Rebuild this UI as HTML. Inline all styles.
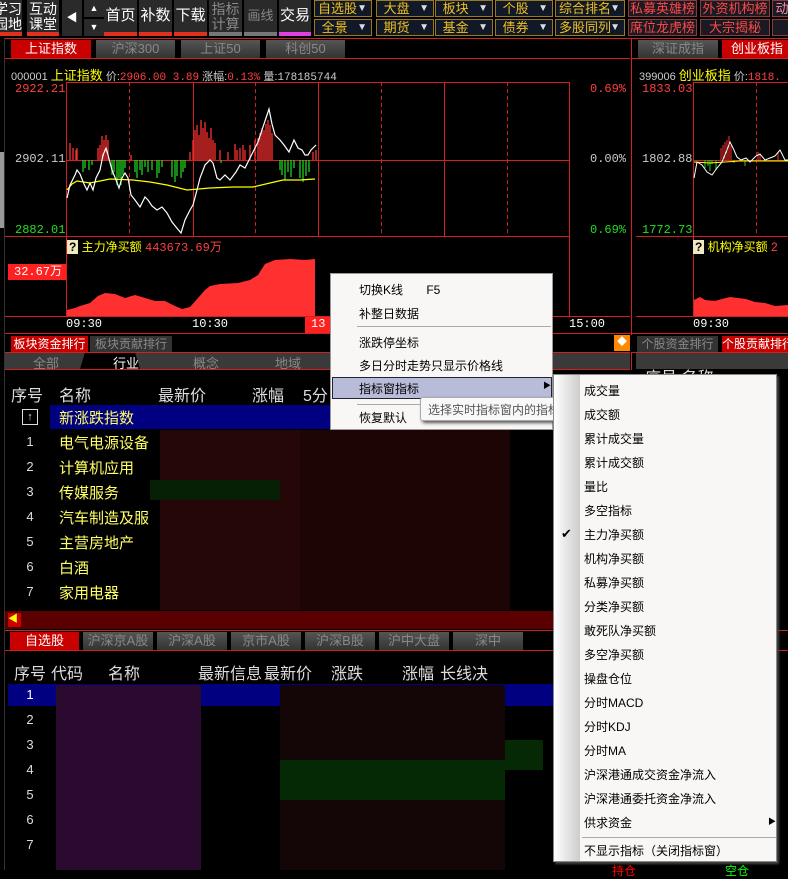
<!DOCTYPE html>
<html><head><meta charset="utf-8"><style>
*{margin:0;padding:0;box-sizing:border-box}
body{width:788px;height:870px;background:#000;overflow:hidden;position:relative;font-family:"Liberation Sans","Noto Sans CJK SC",sans-serif;color:#ccc}
.a{position:absolute;white-space:nowrap}
.tb{position:absolute;top:0;height:36px;background:#2a2a2a;color:#fff;font-size:15px;text-align:center;line-height:32px;border-bottom:4px solid #e0301e;white-space:nowrap;overflow:hidden}
.tb2{line-height:15px;padding-top:2px;font-size:14px}
.dd{position:absolute;height:17px;background:#111827;border:1px solid #9a7a1e;color:#f0c020;font-size:13px;line-height:15px;padding-left:3px}
.dd:after{content:"▼";position:absolute;right:4px;font-size:10px;color:#ddd}
.rd{position:absolute;height:17px;background:#1a1a22;border:1px solid #8a3a3a;color:#ff4848;font-size:13px;line-height:15px;text-align:center;overflow:hidden}
.tab{position:absolute;height:18px;background:linear-gradient(#555,#333);color:#888;font-size:13px;text-align:center;line-height:18px;overflow:hidden;white-space:nowrap}
.tab.on{background:#c80000;color:#fff}
.hl{position:absolute;height:1px;background:#d02020}
.vl{position:absolute;width:1px;background:#d02020}
.th{font-size:16px;color:#ddd}
.nm{font-size:15px;color:#ffff66}
.no{font-size:13px;color:#ddd;width:20px;text-align:center}
.mi{position:absolute;left:28px;font-size:12px;color:#000}
.si{position:absolute;left:30px;font-size:12px;color:#000}
</style></head><body>
<!-- toolbar -->
<div class="tb tb2" style="left:-6px;width:28px;text-align:right;padding-right:2px">学习<br>园地</div>
<div class="tb tb2" style="left:27px;width:32px;">互动<br>课堂</div>
<div class="tb" style="left:62px;width:20px;border-bottom:none;font-size:11px;line-height:36px">◀</div>
<div class="a" style="left:84px;top:0;width:20px;height:17px;background:#2a2a2a;color:#fff;font-size:9px;text-align:center;line-height:17px">▲</div>
<div class="a" style="left:84px;top:19px;width:20px;height:17px;background:#2a2a2a;color:#fff;font-size:9px;text-align:center;line-height:17px">▼</div>
<div class="tb" style="left:104px;width:33px">首页</div>
<div class="tb" style="left:139px;width:33px">补数</div>
<div class="tb" style="left:174px;width:33px">下载</div>
<div class="tb tb2" style="left:209px;width:33px;color:#888;border-bottom-color:#777">指标<br>计算</div>
<div class="tb" style="left:244px;width:33px;color:#888;border-bottom-color:#777;font-size:13px">画线</div>
<div class="tb" style="left:279px;width:32px;border-bottom-color:#e040e0">交易</div>
<div class="dd" style="left:314px;top:0;width:58px">自选股</div>
<div class="dd" style="left:314px;top:19px;width:58px">&nbsp;全景</div>
<div class="dd" style="left:376px;top:0;width:58px">&nbsp;大盘</div>
<div class="dd" style="left:376px;top:19px;width:58px">&nbsp;期货</div>
<div class="dd" style="left:435px;top:0;width:58px">&nbsp;板块</div>
<div class="dd" style="left:435px;top:19px;width:58px">&nbsp;基金</div>
<div class="dd" style="left:495px;top:0;width:58px">&nbsp;个股</div>
<div class="dd" style="left:495px;top:19px;width:58px">&nbsp;债券</div>
<div class="dd" style="left:555px;top:0;width:70px">综合排名</div>
<div class="dd" style="left:555px;top:19px;width:70px">多股同列</div>
<div class="rd" style="left:628px;top:0;width:69px">私募英雄榜</div>
<div class="rd" style="left:628px;top:19px;width:69px">席位龙虎榜</div>
<div class="rd" style="left:700px;top:0;width:70px">外资机构榜</div>
<div class="rd" style="left:700px;top:19px;width:70px">大宗揭秘</div>
<div class="rd" style="left:772px;top:0;width:20px;color:#f8a">动</div>
<div class="rd" style="left:772px;top:19px;width:20px"></div>
<div class="hl" style="left:5px;top:38px;width:783px"></div>
<div class="vl" style="left:4px;top:38px;height:832px;background:#333"></div>
<div class="a" style="left:0;top:152px;width:4px;height:76px;background:#999"></div>
<!-- top tabs -->
<div class="tab on" style="left:11px;top:40px;width:80px">上证指数</div>
<div class="tab" style="left:96px;top:40px;width:79px">沪深300</div>
<div class="tab" style="left:181px;top:40px;width:79px">上证50</div>
<div class="tab" style="left:266px;top:40px;width:79px">科创50</div>
<div class="tab" style="left:638px;top:40px;width:80px">深证成指</div>
<div class="tab on" style="left:722px;top:40px;width:70px">创业板指</div>
<div class="hl" style="left:5px;top:58px;width:625px"></div>
<div class="hl" style="left:632px;top:58px;width:156px"></div>
<div class="vl" style="left:631px;top:38px;height:297px"></div>
<div class="a" style="left:11px;top:65px;font-size:11px;color:#ccc">000001 <span style="color:#ff0;font-size:13px">上证指数</span> 价:<span style="color:#ff4040;font-family:'Liberation Mono',monospace">2906.00 3.89</span> 涨幅:<span style="color:#ff4040;font-family:'Liberation Mono',monospace">0.13%</span> 量:<span style="font-family:'Liberation Mono',monospace">178185744</span></div>
<div class="a" style="left:639px;top:65px;font-size:11px;color:#ccc">399006 <span style="color:#ff0;font-size:13px">创业板指</span> 价:<span style="color:#ff4040;font-family:'Liberation Mono',monospace">1818.</span></div>
<!-- charts svg -->
<svg class="a" style="left:0;top:0" width="788" height="335">
<g stroke="#d02020" fill="none">
<rect x="66.5" y="82.5" width="503" height="234"/>
<line x1="66" y1="236.5" x2="569" y2="236.5"/>
<line x1="66" y1="160.5" x2="569" y2="160.5"/>
<line x1="193.5" y1="82" x2="193.5" y2="236"/><line x1="318.5" y1="82" x2="318.5" y2="236"/><line x1="444.5" y1="82" x2="444.5" y2="236"/>
<g stroke-dasharray="4,3"><line x1="129.5" y1="82" x2="129.5" y2="236"/><line x1="255.5" y1="82" x2="255.5" y2="236"/><line x1="381.5" y1="82" x2="381.5" y2="236"/><line x1="507.5" y1="82" x2="507.5" y2="236"/></g>
<line x1="5" y1="236.5" x2="66" y2="236.5"/>
<line x1="5" y1="316.5" x2="630" y2="316.5"/>
<line x1="5" y1="333.5" x2="788" y2="333.5"/>
<rect x="693.5" y="82.5" width="100" height="234"/>
<line x1="636" y1="236.5" x2="788" y2="236.5"/>
<line x1="636" y1="316.5" x2="788" y2="316.5"/>
<line x1="693" y1="160.5" x2="788" y2="160.5"/>
<line x1="756.5" y1="82" x2="756.5" y2="236" stroke-dasharray="4,3"/>
</g>
<g stroke="#ff3030" stroke-width="1.3">
<path d="M70 160V143M73 160V148M76 160V150M77 160V148M98 160V148M100 160V145M102 160V136M104 160V140M106 160V135M108 160V140M131 160V155M190 160V152M193 160V140M195 160V130M197 160V125M199 160V135M201 160V120M203 160V128M205 160V122M207 160V132M209 160V138M211 160V128M213 160V140M215 160V143M220 160V150M228 160V152M235 160V144M237 160V150M240 160V148M243 160V145M245 160V150M250 160V145M255 160V140M258 160V138M260 160V133M262 160V128M264 160V130M266 160V124M268 160V120M270 160V125M272 160V133M313 160V152M316 160V150"/>
</g>
<g stroke="#20d020" stroke-width="1.3">
<path d="M83 160V172M85 160V168M89 160V170M92 160V165M112 160V175M114 160V172M117 160V185M119 160V178M121 160V185M123 160V175M125 160V168M135 160V172M137 160V178M140 160V170M142 160V175M145 160V167M148 160V172M152 160V170M157 160V178M159 160V173M162 160V167M172 160V177M175 160V182M177 160V176M181 160V178M183 160V172M185 160V168M221 160V163M280 160V170M282 160V175M285 160V180M288 160V172M291 160V177M294 160V168M300 160V178M303 160V182M306 160V176M309 160V172"/>
</g>
<polyline fill="none" stroke="#ffff00" stroke-width="1.3" points="67,190 72,184 77,181 90,183 110,179 133,180 150,182 167,185 187,190 210,188 233,187 253,187 270,183 283,180 300,180 315,179"/>
<polyline fill="none" stroke="#fff" stroke-width="1.2" points="67,198 70,185 75,175 77,170 80,174 84,184 87,190 90,183 93,190 96,178 100,170 103,155 106,148 108,155 112,170 116,180 119,188 122,178 125,173 128,178 131,195 135,200 140,207 145,197 148,200 152,206 157,210 162,207 167,213 172,222 176,227 181,233 185,220 190,210 193,205 197,190 200,178 205,165 210,160 213,163 217,178 220,180 225,175 230,180 236,172 240,165 245,168 250,158 254,150 258,142 262,130 266,118 269,109 272,124 275,135 280,140 284,145 289,152 294,140 298,148 302,150 305,155 308,155 311,150 316,145"/>
<path fill="#ff3030" d="M67 316V310L75 308L80 306L90 303L98 296L105 293L115 294L125 298L135 295L145 298L155 301L165 301L175 306L182 309L190 307L198 298L205 290L210 286L220 284L238 283L250 280L258 275L265 264L275 260L290 259L305 260L315 259V316Z"/>
<g stroke="#ff3030"><path d="M721 160V148M723 160V145M725 160V142M727 160V140M729 160V136M731 160V145M758 160V152M760 160V154M778 160V152"/></g>
<g stroke="#20d020"><path d="M705 160V168M708 160V166M710 160V171M712 160V164M716 160V170M734 160V163M745 160V166"/></g>
<polyline fill="none" stroke="#ffff00" points="694,162 710,163 725,162 740,161 788,161"/>
<polyline fill="none" stroke="#fff" points="694,178 697,162 702,165 707,172 712,175 717,168 722,162 727,150 730,142 733,148 737,157 741,160 746,158 750,162 756,156 760,154 765,160 770,158 775,156 780,150 785,160 788,160"/>
<path fill="#ff3030" d="M694 316V300L700 297L705 300L715 301L722 299L730 297L738 298L746 299L755 302L765 303L775 306L788 305V316Z"/>
</svg>
<div class="a" style="left:15px;top:82px;font-size:12px;color:#ff4040;font-family:'Liberation Mono',monospace">2922.21</div>
<div class="a" style="left:15px;top:152px;font-size:12px;color:#ccc;font-family:'Liberation Mono',monospace">2902.11</div>
<div class="a" style="left:15px;top:223px;font-size:12px;color:#20e020;font-family:'Liberation Mono',monospace">2882.01</div>
<div class="a" style="left:590px;top:82px;font-size:12px;color:#ff4040;font-family:'Liberation Mono',monospace">0.69%</div>
<div class="a" style="left:590px;top:152px;font-size:12px;color:#ccc;font-family:'Liberation Mono',monospace">0.00%</div>
<div class="a" style="left:590px;top:223px;font-size:12px;color:#20e020;font-family:'Liberation Mono',monospace">0.69%</div>
<div class="a" style="left:642px;top:82px;font-size:12px;color:#ff4040;font-family:'Liberation Mono',monospace">1833.03</div>
<div class="a" style="left:642px;top:152px;font-size:12px;color:#ccc;font-family:'Liberation Mono',monospace">1802.88</div>
<div class="a" style="left:642px;top:223px;font-size:12px;color:#20e020;font-family:'Liberation Mono',monospace">1772.73</div>
<div class="a" style="left:67px;top:238px;font-size:12px;color:#ff0"><span style="background:#f0e8c0;color:#000;font-weight:bold;padding:0 2px">?</span> 主力净买额 <span style="color:#ff4040;font-family:'Liberation Mono',monospace">443673.69万</span></div>
<div class="a" style="left:693px;top:238px;font-size:12px;color:#ff0"><span style="background:#f0e8c0;color:#000;font-weight:bold;padding:0 2px">?</span> 机构净买额 <span style="color:#ff4040">2</span></div>
<div class="a" style="left:8px;top:264px;width:58px;height:16px;background:#ff2020;color:#fff;font-size:12px;line-height:16px;padding-left:6px;font-family:'Liberation Mono',monospace">32.67万</div>
<div class="a" style="left:66px;top:317px;font-size:12px;color:#fff;font-family:'Liberation Mono',monospace">09:30</div>
<div class="a" style="left:192px;top:317px;font-size:12px;color:#fff;font-family:'Liberation Mono',monospace">10:30</div>
<div class="a" style="left:305px;top:317px;width:25px;height:16px;background:#ff2020;font-size:12px;color:#fff;padding-left:6px;font-family:'Liberation Mono',monospace">13</div>
<div class="a" style="left:569px;top:317px;font-size:12px;color:#fff;font-family:'Liberation Mono',monospace">15:00</div>
<div class="a" style="left:693px;top:317px;font-size:12px;color:#fff;font-family:'Liberation Mono',monospace">09:30</div>
<!-- section 2 -->
<div class="tab on" style="left:11px;top:336px;width:77px;height:16px;line-height:16px;font-size:12px">板块资金排行</div>
<div class="tab" style="left:90px;top:336px;width:82px;height:16px;line-height:16px;background:#333;font-size:12px">板块贡献排行</div>
<div class="a" style="left:614px;top:335px;width:16px;height:16px;background:#ff8800;color:#fff;font-size:10px;text-align:center;line-height:16px">◆</div>
<div class="tab" style="left:637px;top:336px;width:81px;height:16px;line-height:16px;background:#333;font-size:12px">个股资金排行</div>
<div class="tab on" style="left:722px;top:336px;width:70px;height:16px;line-height:16px;font-size:12px">个股贡献排行</div>
<div class="hl" style="left:5px;top:352px;width:625px"></div>
<div class="hl" style="left:632px;top:352px;width:156px"></div>
<div class="a" style="left:5px;top:353px;width:625px;height:16px;background:#3a3a3a"></div>
<div class="a" style="left:636px;top:353px;width:152px;height:16px;background:#3a3a3a"></div>
<div class="a" style="left:80px;top:353px;width:60px;height:16px;background:#000;clip-path:polygon(8% 0,92% 0,100% 100%,0 100%)"></div>
<div class="a" style="left:33px;top:353px;font-size:13px;color:#888">全部</div>
<div class="a" style="left:113px;top:353px;font-size:13px;color:#fff">行业</div>
<div class="a" style="left:193px;top:353px;font-size:13px;color:#888">概念</div>
<div class="a" style="left:275px;top:353px;font-size:13px;color:#888">地域</div>
<div class="hl" style="left:5px;top:369px;width:625px"></div>
<div class="vl" style="left:631px;top:352px;height:18px"></div>
<div class="a th" style="left:11px;top:382px">序号</div><div class="a th" style="left:59px;top:382px">名称</div>
<div class="a th" style="left:158px;top:382px">最新价</div><div class="a th" style="left:252px;top:382px">涨幅</div><div class="a th" style="left:303px;top:382px">5分</div>
<div class="a th" style="left:645px;top:364px">序号 名称</div>
<div class="a" style="left:50px;top:405px;width:280px;height:24px;background:#000080"></div>
<div class="a" style="left:160px;top:430px;width:170px;height:180px;background:#260707"></div>
<div class="a" style="left:300px;top:430px;width:210px;height:180px;background:#1e0505"></div>
<div class="a" style="left:150px;top:480px;width:130px;height:20px;background:#052005"></div>
<div class="a" style="left:22px;top:409px;width:16px;height:16px;border:1px solid #ddd;color:#ddd;font-size:11px;text-align:center;line-height:14px">↑</div>
<div class="a nm" style="left:59px;top:407px">新涨跌指数</div>
<div class="a no" style="left:20px;top:434px">1</div><div class="a nm" style="left:59px;top:432px">电气电源设备</div>
<div class="a no" style="left:20px;top:459px">2</div><div class="a nm" style="left:59px;top:457px">计算机应用</div>
<div class="a no" style="left:20px;top:484px">3</div><div class="a nm" style="left:59px;top:482px">传媒服务</div>
<div class="a no" style="left:20px;top:509px">4</div><div class="a nm" style="left:59px;top:507px">汽车制造及服</div>
<div class="a no" style="left:20px;top:534px">5</div><div class="a nm" style="left:59px;top:532px">主营房地产</div>
<div class="a no" style="left:20px;top:559px">6</div><div class="a nm" style="left:59px;top:557px">白酒</div>
<div class="a no" style="left:20px;top:584px">7</div><div class="a nm" style="left:59px;top:582px">家用电器</div>
<div class="a" style="left:5px;top:611px;width:625px;height:18px;background:#5a0000"></div>
<div class="a" style="left:8px;top:613px;width:13px;height:14px;background:#c00;color:#ff0;font-size:10px;line-height:14px">◀</div>
<div class="hl" style="left:5px;top:630px;width:783px"></div>
<div class="tab on" style="left:10px;top:632px;width:69px">自选股</div>
<div class="tab" style="left:83px;top:632px;width:70px">沪深京A股</div>
<div class="tab" style="left:157px;top:632px;width:70px">沪深A股</div>
<div class="tab" style="left:231px;top:632px;width:70px">京市A股</div>
<div class="tab" style="left:305px;top:632px;width:70px">沪深B股</div>
<div class="tab" style="left:379px;top:632px;width:70px">沪中大盘</div>
<div class="tab" style="left:453px;top:632px;width:70px">深中</div>
<div class="hl" style="left:5px;top:650px;width:783px"></div>
<div class="a th" style="left:14px;top:660px">序号</div><div class="a th" style="left:51px;top:660px">代码</div><div class="a th" style="left:108px;top:660px">名称</div>
<div class="a th" style="left:198px;top:660px">最新信息</div><div class="a th" style="left:264px;top:660px">最新价</div><div class="a th" style="left:331px;top:660px">涨跌</div>
<div class="a th" style="left:402px;top:660px">涨幅</div><div class="a th" style="left:440px;top:660px">长线决</div>
<div class="a" style="left:8px;top:684px;width:545px;height:22px;background:#000080"></div>
<div class="a" style="left:56px;top:685px;width:145px;height:185px;background:#2a0a2e"></div>
<div class="a" style="left:280px;top:685px;width:225px;height:185px;background:#140606"></div>
<div class="a" style="left:280px;top:760px;width:225px;height:40px;background:#052805"></div>
<div class="a" style="left:505px;top:740px;width:38px;height:30px;background:#052805"></div>
<div class="a no" style="left:20px;top:687px;color:#fff">1</div>
<div class="a no" style="left:20px;top:712px">2</div><div class="a no" style="left:20px;top:737px">3</div><div class="a no" style="left:20px;top:762px">4</div>
<div class="a no" style="left:20px;top:787px">5</div><div class="a no" style="left:20px;top:812px">6</div><div class="a no" style="left:20px;top:837px">7</div>
<!-- context menu -->
<div class="a" style="left:330px;top:273px;width:223px;height:157px;background:#f8f7f5;border:1px solid #999">
<div class="mi" style="top:7px">切换K线 &nbsp; &nbsp; &nbsp; F5</div>
<div class="mi" style="top:31px">补整日数据</div>
<div class="a" style="left:26px;top:52px;width:194px;height:1px;background:#aaa"></div>
<div class="mi" style="top:60px">涨跌停坐标</div>
<div class="mi" style="top:83px">多日分时走势只显示价格线</div>
<div class="a" style="left:1px;top:103px;width:220px;height:22px;background:#b8bcd8;border:1px solid #223"></div>
<div class="mi" style="top:106px">指标窗指标</div>
<div class="a" style="left:212px;top:106px;font-size:8px;color:#000">▶</div>
<div class="a" style="left:26px;top:130px;width:194px;height:1px;background:#aaa"></div>
<div class="mi" style="top:135px">恢复默认</div>
</div>
<div class="a" style="left:420px;top:397px;width:147px;height:24px;background:#f8f8f8;border:1px solid #aaa;border-radius:3px;box-shadow:2px 2px 3px #555;font-size:12px;color:#555;padding:3px 0 0 7px">选择实时指标窗内的指标</div>
<!-- submenu -->
<div class="a" style="left:553px;top:374px;width:224px;height:488px;background:#f8f7f5;border:1px solid #888;box-shadow:2px 2px 2px #444">
<div class="a" style="left:0;top:0;width:26px;height:486px;background:linear-gradient(90deg,#fff,#ccc)"></div>
<div class="si" style="top:7px">成交量</div><div class="si" style="top:31px">成交额</div><div class="si" style="top:55px">累计成交量</div>
<div class="si" style="top:79px">累计成交额</div><div class="si" style="top:103px">量比</div><div class="si" style="top:127px">多空指标</div>
<div class="a" style="left:7px;top:151px;font-size:13px;color:#000">✔</div>
<div class="si" style="top:151px">主力净买额</div><div class="si" style="top:175px">机构净买额</div><div class="si" style="top:199px">私募净买额</div>
<div class="si" style="top:223px">分类净买额</div><div class="si" style="top:247px">敢死队净买额</div><div class="si" style="top:271px">多空净买额</div>
<div class="si" style="top:295px">操盘仓位</div><div class="si" style="top:319px">分时MACD</div><div class="si" style="top:343px">分时KDJ</div>
<div class="si" style="top:367px">分时MA</div><div class="si" style="top:391px">沪深港通成交资金净流入</div><div class="si" style="top:415px">沪深港通委托资金净流入</div>
<div class="si" style="top:439px">供求资金</div><div class="a" style="left:214px;top:441px;font-size:8px;color:#000">▶</div>
<div class="a" style="left:28px;top:462px;width:194px;height:1px;background:#aaa"></div>
<div class="si" style="top:467px">不显示指标（关闭指标窗）</div>
</div>
<div class="a" style="left:612px;top:862px;font-size:12px;color:#f00">持仓</div>
<div class="a" style="left:725px;top:862px;font-size:12px;color:#0f0">空仓</div>
</body></html>
